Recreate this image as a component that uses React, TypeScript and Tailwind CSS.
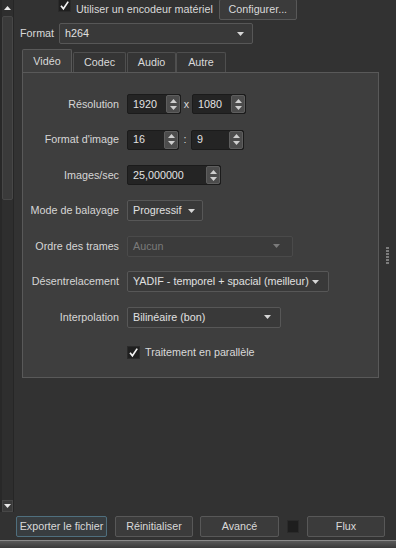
import React from 'react';

function Arrow({ up = false, className = '' }: { up?: boolean; className?: string }) {
  return (
    <svg width="7" height="4" viewBox="0 0 7 4" className={className}>
      <path d={up ? 'M0 4 L3.5 0 L7 4 Z' : 'M0 0 L7 0 L3.5 4 Z'} fill="currentColor" />
    </svg>
  );
}

function Check({ checked = true }: { checked?: boolean }) {
  return (
    <div className="w-[13px] h-[13px] bg-[#1f1f1f] border border-[#2a2a2a] flex items-center justify-center shrink-0">
      {checked && (
        <svg width="11" height="11" viewBox="0 0 11 11">
          <path d="M2 5.8 L4.4 8.8 L9.2 1.6" stroke="#f2f2f2" strokeWidth="1.7" fill="none" />
        </svg>
      )}
    </div>
  );
}

function Spin({ value, className }: { value: string; className: string }) {
  return (
    <div className={`flex h-[20px] bg-[#242424] border border-[#1b1b1b] rounded-[2px] ${className}`}>
      <div className="flex-1 flex items-center pl-[5px] text-[#e2e2e2]">{value}</div>
      <div className="w-[14px] bg-[#4c4c4c] border border-[#5e5e5e] rounded-[2px] flex flex-col items-center justify-center gap-[3px] text-[#cfcfcf]">
        <Arrow up />
        <Arrow />
      </div>
    </div>
  );
}

function Combo({ value, className, disabled = false }: { value: string; className: string; disabled?: boolean }) {
  return (
    <div
      className={`flex items-center justify-between h-[21px] pl-[5px] pr-[7px] rounded-[2px] border ${
        disabled ? 'border-[#4a4a4a] bg-[#3b3b3b] text-[#7a7a7a]' : 'border-[#575757] bg-[#393939] text-[#e0e0e0]'
      } ${className}`}
    >
      <span className="whitespace-nowrap">{value}</span>
      <Arrow className={disabled ? 'text-[#7a7a7a] shrink-0' : 'text-[#d6d6d6] shrink-0'} />
    </div>
  );
}

function Btn({ label, className, focus = false }: { label: string; className: string; focus?: boolean }) {
  return (
    <div
      className={`h-[21px] flex items-center justify-center rounded-[2px] border ${
        focus ? 'border-[#4f6f7e] bg-[#383d40]' : 'border-[#585858] bg-[#3b3b3b]'
      } ${className}`}
    >
      {label}
    </div>
  );
}

function Row({ label, children }: { label: string; children: React.ReactNode }) {
  return (
    <div className="flex items-center h-[20px]">
      <div className="w-[96px] text-right text-[#d6d6d6]">{label}</div>
      <div className="ml-[8px] flex items-center">{children}</div>
    </div>
  );
}

export default function App() {
  return (
    <div className="w-[396px] h-[548px] bg-[#323232] flex flex-col overflow-hidden font-['Liberation_Sans',sans-serif] text-[10.75px] text-[#d9d9d9]">
      <div className="flex h-[512px]">
        {/* Left scrollbar */}
        <div className="w-[14px] h-full flex flex-col bg-[#2e2e2e] border-l-[2px] border-l-[#282828] border-r border-r-[#262626]">
          <div className="h-[16px] flex items-center justify-center text-[#e8e8e8]">
            <Arrow up />
          </div>
          <div className="h-[184px] bg-[#3a3a3a] border border-[#474747] rounded-[2px]" />
          <div className="flex-1" />
          <div className="h-[12px] flex items-center justify-center bg-[#3a3a3a] border border-[#474747] text-[#e8e8e8]">
            <Arrow />
          </div>
        </div>

        {/* Main content */}
        <div className="w-[365px] flex flex-col">
          <div className="h-[17px] flex items-start">
            <div className="ml-[44px] mt-[-1px]">
              <Check />
            </div>
            <span className="ml-[5px] mt-[1px]">Utiliser un encodeur matériel</span>
            <Btn label="Configurer..." className="ml-[6px] w-[78px] h-[17px] mt-[-1px]" />
          </div>

          <div className="flex items-center mt-[6px]">
            <span className="ml-[6px] w-[39px]">Format</span>
            <Combo value="h264" className="w-[194px] h-[20px] pr-[8px]" />
          </div>

          {/* Tabs */}
          <div className="flex items-end ml-[8px] mt-[5px] h-[23px]">
            <div className="w-[50px] h-[23px] bg-[#3e3e3e] border border-[#595959] border-b-0 rounded-t-[2px] flex items-center justify-center">
              Vidéo
            </div>
            <div className="w-[53px] h-[20px] ml-[1px] bg-[#353535] border border-[#4f4f4f] border-b-0 rounded-t-[2px] flex items-center justify-center">
              Codec
            </div>
            <div className="w-[49px] h-[20px] ml-[1px] bg-[#353535] border border-[#4f4f4f] border-b-0 rounded-t-[2px] flex items-center justify-center">
              Audio
            </div>
            <div className="w-[50px] h-[20px] bg-[#353535] border border-[#4f4f4f] border-b-0 rounded-t-[2px] flex items-center justify-center">
              Autre
            </div>
          </div>

          {/* Panel */}
          <div className="ml-[8px] h-[306px] bg-[#3e3e3e] border border-[#595959] flex flex-col pt-[21px] gap-[15.5px]">
            <Row label="Résolution">
              <Spin value="1920" className="w-[54px]" />
              <span className="w-[11px] text-center">x</span>
              <Spin value="1080" className="w-[54px]" />
            </Row>
            <Row label="Format d'image">
              <Spin value="16" className="w-[52px]" />
              <span className="w-[12px] text-center">:</span>
              <Spin value="9" className="w-[53px]" />
            </Row>
            <Row label="Images/sec">
              <Spin value="25,000000" className="w-[94px]" />
            </Row>
            <Row label="Mode de balayage">
              <Combo value="Progressif" className="w-[76px]" />
            </Row>
            <Row label="Ordre des trames">
              <Combo value="Aucun" className="w-[166px] pr-[12px]" disabled />
            </Row>
            <Row label="Désentrelacement">
              <Combo value="YADIF - temporel + spacial (meilleur)" className="w-[202px] pr-[9px]" />
            </Row>
            <Row label="Interpolation">
              <Combo value="Bilinéaire (bon)" className="w-[154px] pr-[9px]" />
            </Row>
            <div className="flex items-center h-[20px] pl-[104px]">
              <Check />
              <span className="ml-[5px]">Traitement en parallèle</span>
            </div>
          </div>
        </div>

        {/* Right splitter */}
        <div className="flex-1 flex items-center justify-center">
          <div className="flex flex-col gap-[1px] pb-[2px]">
            {[0, 1, 2, 3, 4, 5].map((i) => (
              <div key={i} className="w-[3px] h-[2px] bg-[#7c7c7c]" />
            ))}
          </div>
        </div>
      </div>

      {/* Bottom buttons */}
      <div className="h-[28px] flex items-center pl-[16px] pt-[1px]">
        <Btn label="Exporter le fichier" className="w-[91px]" focus />
        <Btn label="Réinitialiser" className="w-[78px] ml-[8px]" />
        <Btn label="Avancé" className="w-[79px] ml-[7px]" />
        <div className="w-[12px] h-[13px] ml-[8px] bg-[#1e1e1e] border border-[#2a2a2a]" />
        <Btn label="Flux" className="w-[78px] ml-[8px]" />
      </div>
      <div className="flex-1 border-t border-t-[#8a8a8a] bg-gradient-to-b from-[#5a5a5a] to-[#3a3a3a]" />
    </div>
  );
}
